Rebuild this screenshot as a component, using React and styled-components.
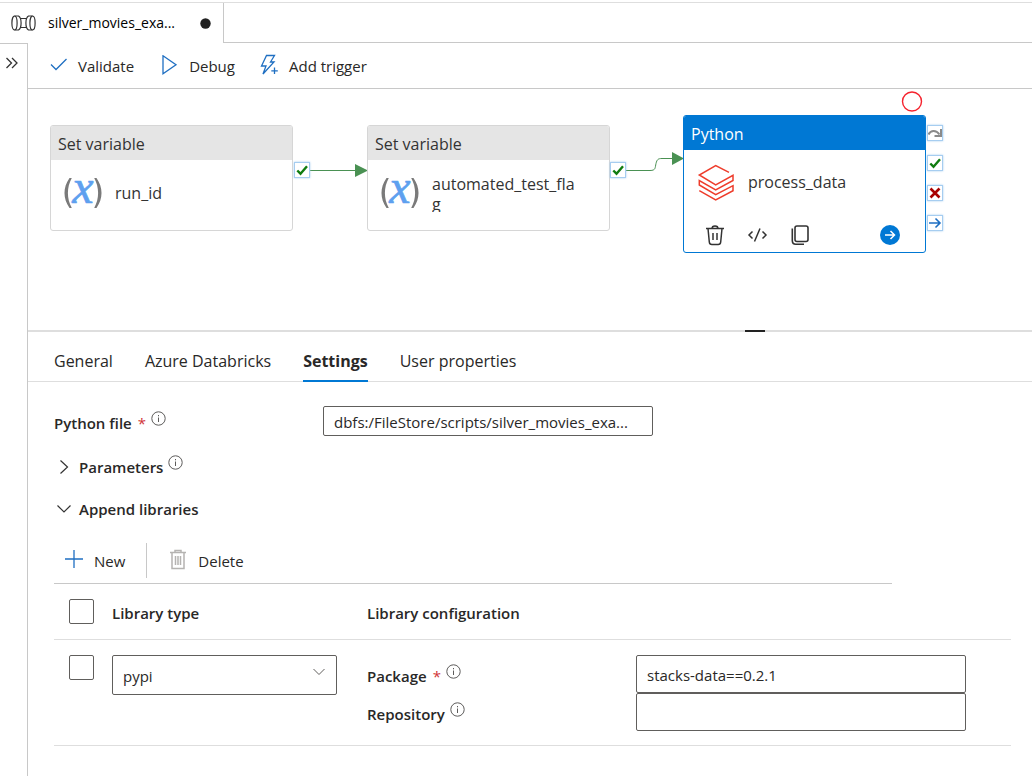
import React, { useState } from 'react';
import styled, { createGlobalStyle, css } from 'styled-components';

const accent = '#0078d4';
const iconBlue = '#1f6fc2';
const lineGreen = '#4a9153';
const textColor = '#292827';
const borderGrey = '#c8c8c8';
const borderLight = '#dedede';
const inputBorder = '#605e5c';

const GlobalStyle = createGlobalStyle`
  * {
    box-sizing: border-box;
  }
  body {
    margin: 0;
    background: #fff;
    color: ${textColor};
    font-family: 'Open Sans', 'Noto Sans', sans-serif;
    font-size: 15px;
    line-height: 20px;
  }
  button, input, select {
    font: inherit;
    color: inherit;
  }
  svg {
    display: block;
    flex: none;
  }
`;

const Page = styled.div`
  display: flex;
  flex-direction: column;
  min-height: 100vh;
  padding-top: 2px;
`;

const FileTabs = styled.div`
  display: flex;
  height: 41px;
  border-top: 1px solid ${borderLight};
`;

const FileTab = styled.button`
  display: flex;
  align-items: center;
  width: 224px;
  padding: 0 12px 0 11px;
  border: none;
  border-right: 1px solid ${borderGrey};
  background: none;
  color: #000;
  font-size: 14px;
  font-weight: 500;
`;

const FileName = styled.span`
  flex: 1;
  margin-left: 12px;
  text-align: left;
  white-space: nowrap;
`;

const FileTabsRest = styled.div`
  flex: 1;
  border-bottom: 1px solid ${borderGrey};
`;

const Workspace = styled.div`
  display: flex;
  flex: 1;
`;

const SideRail = styled.div`
  width: 28px;
  border-top: 1px solid ${borderGrey};
  border-right: 1px solid ${borderGrey};
`;

const ExpandButton = styled.button`
  display: block;
  padding: 13px 5px;
  border: none;
  background: none;
`;

const Main = styled.main`
  flex: 1;
  min-width: 0;
`;

const Toolbar = styled.div`
  display: flex;
  align-items: center;
  gap: 25px;
  height: 46px;
  padding-left: 22px;
  border-bottom: 1px solid ${borderGrey};
`;

const ToolbarButton = styled.button`
  display: flex;
  align-items: center;
  gap: 10px;
  padding: 0;
  border: none;
  background: none;
`;

const Canvas = styled.div`
  position: relative;
  height: 241px;
  overflow: hidden;
`;

const Wires = styled.svg`
  position: absolute;
  top: 0;
  left: 0;
`;

const Node = styled.div`
  position: absolute;
  left: ${({ $x }) => $x}px;
  top: ${({ $y }) => $y}px;
  width: 243px;
  border: 1px solid ${({ $selected }) => ($selected ? accent : '#d6d6d6')};
  border-radius: 3px;
  background: #fff;
  font-size: 16px;
  overflow: hidden;
`;

const NodeHeader = styled.div`
  height: 34px;
  padding: 0 7px;
  background: #e5e5e5;
  color: #333;
  line-height: 36px;
  ${({ $selected }) => $selected && css`
    background: ${accent};
    color: #fff;
  `}
`;

const NodeBody = styled.div`
  display: flex;
  align-items: center;
  gap: 12px;
  height: ${({ $height }) => $height}px;
  padding: 0 12px 4px;
`;

const NodeName = styled.div`
  width: 148px;
  max-height: 38px;
  color: #333;
  word-break: break-all;
  overflow: hidden;
`;

const NodeActions = styled.div`
  display: flex;
  align-items: center;
  gap: 20px;
  height: 34px;
  padding: 0 25px 0 20px;
`;

const NodeAction = styled.button`
  padding: 0;
  border: none;
  background: none;
  &:last-child {
    margin-left: auto;
  }
`;

const Badge = styled.div`
  position: absolute;
  left: ${({ $x }) => $x}px;
  top: ${({ $y }) => $y}px;
  display: grid;
  place-items: center;
  width: 16px;
  height: 16px;
  border: 1px solid #a6cdf0;
  background: #fff;
  box-shadow: 0 0 2px #a6cdf0;
`;

const Breakpoint = styled.button`
  position: absolute;
  left: ${({ $x }) => $x}px;
  top: ${({ $y }) => $y}px;
  padding: 0;
  border: none;
  background: none;
`;

const Panel = styled.section`
  position: relative;
  border-top: 2px solid ${borderLight};
`;

const Grip = styled.div`
  position: absolute;
  top: -2px;
  left: 717px;
  width: 20px;
  height: 2px;
  background: #222;
`;

const PanelTabs = styled.div`
  display: flex;
  gap: 32px;
  height: 50px;
  padding-left: 26px;
  border-bottom: 1px solid ${borderLight};
  font-size: 16px;
`;

const PanelTab = styled.button`
  height: 50px;
  padding: 9px 0 0;
  border: none;
  border-bottom: 2px solid ${({ $active }) => ($active ? accent : 'transparent')};
  background: none;
  font-weight: ${({ $active }) => ($active ? 700 : 400)};
  white-space: nowrap;
`;

const Form = styled.div`
  padding: 24px 21px 0 26px;
`;

const Field = styled.div`
  display: flex;
  height: ${({ $height }) => $height}px;
`;

const FieldLabel = styled.label`
  display: flex;
  flex: none;
  width: 269px;
  padding-top: ${({ $top }) => $top}px;
  font-weight: 600;
  white-space: nowrap;
`;

const Required = styled.span`
  margin-left: 6px;
  color: #d13438;
  font-weight: 400;
`;

const InfoMark = styled.span`
  margin: -2px 0 0 5px;
`;

const TextInput = styled.input`
  width: 330px;
  height: 100%;
  padding: 2px 10px 0;
  border: 1px solid ${inputBorder};
  border-radius: 2px;
  background: #fff;
`;

const Section = styled.button`
  display: flex;
  align-items: center;
  gap: 7px;
  width: 100%;
  height: 42px;
  padding: 0 0 0 2px;
  border: none;
  background: none;
  font-weight: 600;
`;

const SectionTitle = styled.span`
  display: flex;
`;

const Sections = styled.div`
  margin-top: 10px;
`;

const ListToolbar = styled.div`
  display: flex;
  align-items: center;
  max-width: 838px;
  padding: 13px 0 5px 10px;
  border-bottom: 1px solid ${borderGrey};
`;

const Divider = styled.div`
  width: 1px;
  height: 35px;
  margin: 0 21px;
  background: ${borderGrey};
`;

const Libraries = styled.table`
  width: 100%;
  border-collapse: collapse;
  table-layout: fixed;
  th, td {
    padding: 15px 0 14px;
    border-bottom: 1px solid ${borderLight};
    text-align: left;
    vertical-align: top;
  }
  th {
    height: 55px;
    padding-bottom: 0;
    font-weight: 600;
  }
  th:first-child, td:first-child {
    width: 58px;
    padding-left: 15px;
  }
  th:nth-child(2), td:nth-child(2) {
    width: 255px;
  }
`;

const HeadText = styled.div`
  padding-top: 4px;
`;

const Check = styled.input`
  display: block;
  appearance: none;
  width: 25px;
  height: 25px;
  margin: 0;
  border: 1px solid ${inputBorder};
  border-radius: 2px;
  background: #fff;
  &:checked {
    background: ${accent};
  }
`;

const SelectWrap = styled.div`
  position: relative;
  width: 225px;
  svg {
    position: absolute;
    top: 13px;
    right: 12px;
    pointer-events: none;
  }
`;

const Select = styled.select`
  display: block;
  appearance: none;
  width: 100%;
  height: 40px;
  padding: 2px 30px 0 10px;
  border: 1px solid ${inputBorder};
  border-radius: 2px;
  background: #fff;
`;

const Line = ({ w, h, color = '#333', width = 1, children }) => (
  <svg
    width={w}
    height={h}
    viewBox={`0 0 ${w} ${h}`}
    fill="none"
    stroke={color}
    strokeWidth={width}
    aria-hidden="true"
  >
    {children}
  </svg>
);

const PipelineIcon = () => (
  <Line w={25} h={18} width={1.2}>
    <ellipse cx="3.5" cy="9" rx="2.6" ry="7" />
    <path d="M3.5 2h4c1.800 1 2.600 4 2.600 7s-.8 6-2.600 7h-4" />
    <path d="M9.300 4.500h6.400M9.300 13.500h6.400" />
    <path d="M21.500 2h-4c-1.800 1-2.600 4-2.600 7s.8 6 2.600 7h4" />
    <ellipse cx="21.500" cy="9" rx="2.600" ry="7" />
  </Line>
);

const VariableIcon = () => (
  <svg width="40" height="64" viewBox="0 -15 40 64" aria-hidden="true">
    <path d="M6.500 2C-.2 11.500-.2 22.500 6.500 32h2.300C3.600 22.500 3.600 11.500 8.800 2z" fill="#7a7a7a" />
    <path d="M33.500 2c6.700 9.500 6.700 20.500 0 30h-2.300c5.200-9.500 5.200-20.500 0-30z" fill="#7a7a7a" />
    <text
      x="20"
      y="27"
      textAnchor="middle"
      fontFamily="Liberation Serif, serif"
      fontStyle="italic"
      fontSize="48"
      fill="#5ea0ef"
      stroke="#5ea0ef"
      strokeWidth="0.7"
    >
      x
    </text>
  </svg>
);

const DatabricksIcon = () => (
  <Line w={40} h={38} color="#ee3d2c" width={1.5}>
    <path d="M33 9.300 19.700 2.500 3.300 12l16.400 10L37 12.300v5.200L19.700 27 3.300 17.500V22l16.400 9.700L37 22.700v5L19.700 37 3.300 27.700" />
  </Line>
);

const InfoIcon = () => (
  <Line w={15} h={15} color="#5c5b5a">
    <circle cx="7.5" cy="7.5" r="6.7" />
    <path d="M7.500 6.500v4.500M7.500 4v1.300" />
  </Line>
);

const CheckMark = () => (
  <Line w={14} h={14} color="#107c10" width={2.4}>
    <path d="M2.300 7.500 5.500 10.700 12 3.200" />
  </Line>
);

const Chevron = ({ open }) => (
  <Line w={16} h={16} width={1.2}>
    {open ? <path d="M1.500 4.500 8 11l6.500-6.500" /> : <path d="M4.500 1.500 11.500 8l-7 6.500" />}
  </Line>
);

const Info = () => <InfoMark><InfoIcon /></InfoMark>;

export default function App() {
  const tabs = ['General', 'Azure Databricks', 'Settings', 'User properties'];
  const [activeTab, setActiveTab] = useState('Settings');
  const [file, setFile] = useState('dbfs:/FileStore/scripts/silver_movies_exa...');
  const [pkg, setPkg] = useState('stacks-data==0.2.1');
  const [repo, setRepo] = useState('');

  return (
    <>
      <GlobalStyle />
      <Page>
        <FileTabs>
          <FileTab type="button">
            <PipelineIcon />
            <FileName>silver_movies_exa...</FileName>
            <svg width="11" height="11" viewBox="0 0 11 11"><circle cx="5.5" cy="5.5" r="5.2" fill="#222" /></svg>
          </FileTab>
          <FileTabsRest />
        </FileTabs>
        <Workspace>
          <SideRail>
            <ExpandButton type="button" aria-label="Expand">
              <Line w={14} h={12} width={1.3}>
                <path d="M1.500 1 6.500 6l-5 5M7 1l5 5-5 5" />
              </Line>
            </ExpandButton>
          </SideRail>
          <Main>
            <Toolbar>
              <ToolbarButton type="button">
                <Line w={18} h={20} color={iconBlue} width={1.3}>
                  <path d="M1 8.500 6 13.500 16.500 3" />
                </Line>
                Validate
              </ToolbarButton>
              <ToolbarButton type="button">
                <Line w={20} h={22} color={iconBlue} width={1.3}>
                  <path d="M4 .8 17 9.800 4 18.800z" />
                </Line>
                Debug
              </ToolbarButton>
              <ToolbarButton type="button">
                <Line w={19} h={23} color={iconBlue} width={1.3}>
                  <path d="M6.500 1.500h8L10.500 8H14L3 20l3-8H1.500z" />
                  <path d="M14.500 13.500v6.500M11.300 16.800h6.500" />
                </Line>
                Add trigger
              </ToolbarButton>
            </Toolbar>

            <Canvas>
              <Wires width="700" height="241" fill="none" stroke={lineGreen}>
                <path d="M282 81.500h48M598 81.500h24c6 0 5-3 6-7s2-5 6-5h14" />
                <path d="M327 75v13l13-6.500zM644 63v13l12-6.500z" fill={lineGreen} stroke="none" />
              </Wires>
              <Node $x={22} $y={36}>
                <NodeHeader>Set variable</NodeHeader>
                <NodeBody $height={70}>
                  <VariableIcon />
                  <NodeName>run_id</NodeName>
                </NodeBody>
              </Node>
              <Node $x={339} $y={36}>
                <NodeHeader>Set variable</NodeHeader>
                <NodeBody $height={70}>
                  <VariableIcon />
                  <NodeName>automated_test_flag</NodeName>
                </NodeBody>
              </Node>
              <Node $x={655} $y={26} $selected>
                <NodeHeader $selected>Python</NodeHeader>
                <NodeBody $height={68}>
                  <DatabricksIcon />
                  <NodeName>process_data</NodeName>
                </NodeBody>
                <NodeActions>
                  <NodeAction type="button" aria-label="Delete activity">
                    <Line w={22} h={22} width={1.5}>
                      <path d="M2 4.500h18M8 4.500C8 1 14 1 14 4.500M4 4.500l1.300 13.500c.2 2 1 2.500 2.500 2.500h6.400c1.500 0 2.300-.5 2.500-2.500L18 4.500M9 9v7M13 9v7" />
                    </Line>
                  </NodeAction>
                  <NodeAction type="button" aria-label="View code">
                    <Line w={22} h={22} width={1.5}>
                      <path d="M6.500 7.500 3 11l3.500 3.500M16.500 7.500 20 11l-3.500 3.500M14 4.500 8.500 17.500" />
                    </Line>
                  </NodeAction>
                  <NodeAction type="button" aria-label="Clone">
                    <Line w={22} h={22} width={1.6}>
                      <rect x="7" y="2" width="13" height="15.5" rx="2" />
                      <path d="M4.300 4.500v12c0 2.500 1 3.700 3.500 3.700H16" />
                    </Line>
                  </NodeAction>
                  <NodeAction type="button" aria-label="Add output">
                    <svg width="20" height="20" viewBox="0 0 20 20" fill="none">
                      <circle cx="10" cy="10" r="10" fill={accent} />
                      <path d="M5 10h9M10.500 6l4 4-4 4" stroke="#fff" strokeWidth="1.5" />
                    </svg>
                  </NodeAction>
                </NodeActions>
              </Node>
              <Badge $x={266} $y={73}><CheckMark /></Badge>
              <Badge $x={582} $y={73}><CheckMark /></Badge>
              <Badge $x={899} $y={36}>
                <Line w={14} h={14} color="#8a8a8a" width={2}>
                  <path d="M.5 8.500C2.500 4 8 3.500 11.500 8.500M13 3v7H6.500" />
                </Line>
              </Badge>
              <Badge $x={899} $y={66}><CheckMark /></Badge>
              <Badge $x={899} $y={96}>
                <Line w={14} h={14} color="#a80000" width={2.6}>
                  <path d="M2.500 2.500l9 9M11.500 2.500l-9 9" />
                </Line>
              </Badge>
              <Badge $x={899} $y={126}>
                <Line w={14} h={14} color={iconBlue} width={1.6}>
                  <path d="M1 7h11M7.500 2.500 12 7l-4.500 4.500" />
                </Line>
              </Badge>
              <Breakpoint type="button" aria-label="Breakpoint" $x={873} $y={2}>
                <Line w={22} h={22} color="#f5222d" width={1.4}>
                  <circle cx="11" cy="10.5" r="9.5" />
                </Line>
              </Breakpoint>
            </Canvas>

            <Panel>
              <Grip />
              <PanelTabs>
                {tabs.map((tab) => (
                  <PanelTab
                    key={tab}
                    type="button"
                    $active={tab === activeTab}
                    onClick={() => setActiveTab(tab)}
                  >
                    {tab}
                  </PanelTab>
                ))}
              </PanelTabs>
              <Form>
                <Field $height={30}>
                  <FieldLabel htmlFor="python-file" $top={7}>
                    Python file
                    <Required>*</Required>
                    <Info />
                  </FieldLabel>
                  <TextInput id="python-file" value={file} onChange={(e) => setFile(e.target.value)} />
                </Field>
                <Sections>
                  <Section type="button" aria-expanded="false">
                    <Chevron />
                    <SectionTitle>
                      Parameters
                      <Info />
                    </SectionTitle>
                  </Section>
                  <Section type="button" aria-expanded="true">
                    <Chevron open />
                    <SectionTitle>Append libraries</SectionTitle>
                  </Section>
                </Sections>

                <ListToolbar>
                  <ToolbarButton type="button">
                    <Line w={20} h={24} color={iconBlue} width={1.3}>
                      <path d="M10 1v18M1 10h18" />
                    </Line>
                    New
                  </ToolbarButton>
                  <Divider />
                  <ToolbarButton type="button">
                    <Line w={20} h={24} color="#b5b3b1" width={1.5}>
                      <path d="M2 3.500h16M7 3.500v-2h6v2M4 3.500v16h12v-16M7.500 7v9M10 7v9M12.500 7v9" />
                    </Line>
                    Delete
                  </ToolbarButton>
                </ListToolbar>

                <Libraries>
                  <thead>
                    <tr>
                      <th><Check type="checkbox" aria-label="Select all" /></th>
                      <th><HeadText>Library type</HeadText></th>
                      <th><HeadText>Library configuration</HeadText></th>
                    </tr>
                  </thead>
                  <tbody>
                    <tr>
                      <td><Check type="checkbox" aria-label="Select library" /></td>
                      <td>
                        <SelectWrap>
                          <Select aria-label="Library type" defaultValue="pypi">
                            <option>pypi</option>
                          </Select>
                          <Line w={12} h={8} color={inputBorder}>
                            <path d="M.5 1 6 6.500 11.500 1" />
                          </Line>
                        </SelectWrap>
                      </td>
                      <td>
                        <Field $height={38}>
                          <FieldLabel htmlFor="package" $top={11}>
                            Package
                            <Required>*</Required>
                            <Info />
                          </FieldLabel>
                          <TextInput id="package" value={pkg} onChange={(e) => setPkg(e.target.value)} />
                        </Field>
                        <Field $height={38}>
                          <FieldLabel htmlFor="repository" $top={11}>
                            Repository
                            <Info />
                          </FieldLabel>
                          <TextInput id="repository" value={repo} onChange={(e) => setRepo(e.target.value)} />
                        </Field>
                      </td>
                    </tr>
                  </tbody>
                </Libraries>
              </Form>
            </Panel>
          </Main>
        </Workspace>
      </Page>
    </>
  );
}
